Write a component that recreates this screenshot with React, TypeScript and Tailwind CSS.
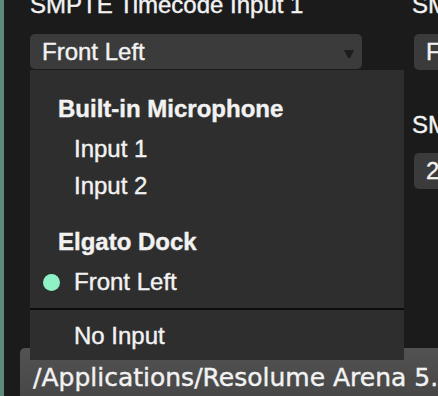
import React from "react";

const menuGroups = [
  { title: "Built-in Microphone", items: ["Input 1", "Input 2"] },
  { title: "Elgato Dock", items: ["Front Left"] },
];

const Arrow = () => (
  <svg width="10" height="8" viewBox="0 0 10 8" className="mt-[5px] shrink-0">
    <polygon points="0,0 10,0 6,8 4,8" fill="#1c1c1c" />
  </svg>
);

const App = () => {
  return (
    <div className="relative w-[438px] h-[396px] overflow-hidden flex bg-[#1b1b1b] text-[#f2f2f2] [-webkit-text-stroke-width:0.4px] font-['Liberation_Sans',Arial,sans-serif]">
      {/* green strip at the window edge */}
      <div className="w-[4px] shrink-0 bg-[#5e8b79]" />

      <div className="flex-1 flex flex-col min-w-0">
        <div className="h-[348px] shrink-0 flex pl-[26px] gap-[50px]">
          {/* column 1 */}
          <div className="w-[332px] shrink-0 flex flex-col mt-[-7px]">
            <div className="text-[24px] leading-[24px] whitespace-nowrap">SMPTE Timecode Input 1</div>
            <div className="mt-[17px] h-[35px] rounded-[5px] bg-[#3b3b3b] flex items-center justify-between pl-[12px] pr-[8px]">
              <span className="text-[24px] leading-[35px] whitespace-nowrap">Front Left</span>
              <Arrow />
            </div>
          </div>

          {/* column 2, cut off by the window */}
          <div className="w-[300px] shrink-0 flex flex-col mt-[-7px]">
            <div className="text-[24px] leading-[24px] whitespace-nowrap">SMPTE Timecode Input 2</div>
            <div className="mt-[17px] ml-[2px] h-[36px] rounded-[5px] bg-[#3b3b3b] flex items-center pl-[12px]">
              <span className="text-[24px] leading-[36px] whitespace-nowrap">Front Right</span>
            </div>
            <div className="mt-[43px] text-[24px] leading-[24px] whitespace-nowrap">SMPTE Frame Rate</div>
            <div className="mt-[16px] ml-[2px] h-[36px] rounded-[5px] bg-[#3b3b3b] flex items-center pl-[12px]">
              <span className="text-[24px] leading-[36px] whitespace-nowrap">25 fps</span>
            </div>
          </div>
        </div>

        {/* path field */}
        <div className="ml-[16px] h-[48px] w-[440px] rounded-tl-[5px] bg-gradient-to-b from-[#525252] to-[#474747] pl-[13px] pt-[15px] overflow-hidden">
          <div className="text-[25px] leading-[29px] whitespace-nowrap font-['DejaVu_Sans',sans-serif]">
            /Applications/Resolume Arena 5.0
          </div>
        </div>
      </div>

      {/* open dropdown menu */}
      <div className="absolute left-[30px] top-[70px] w-[374px] h-[290px] bg-[#2e2e2e] flex flex-col pt-[21px]">
        {menuGroups.map((group, gi) => (
          <div key={group.title} className={gi > 0 ? "mt-[20px]" : ""}>
            <div className="pl-[28px] text-[24px] leading-[36px] font-bold">{group.title}</div>
            {group.items.map((item, i) => (
              <div
                key={item}
                className={`flex items-center h-[36px] ${i === 0 ? "mt-[4px]" : "mt-[1px]"}`}
              >
                <div className="w-[44px] shrink-0 flex">
                  {group.title === "Elgato Dock" && item === "Front Left" && (
                    <div className="ml-[13px] w-[17px] h-[17px] rounded-full bg-[#8ff2c6]" />
                  )}
                </div>
                <span className="text-[24px] leading-[36px]">{item}</span>
              </div>
            ))}
          </div>
        ))}
        <div className="mt-[8px] h-[2px] bg-[#0d0d0d]" />
        <div className="mt-[8px] pl-[44px] text-[24px] leading-[36px]">No Input</div>
      </div>
    </div>
  );
};

export default App;
